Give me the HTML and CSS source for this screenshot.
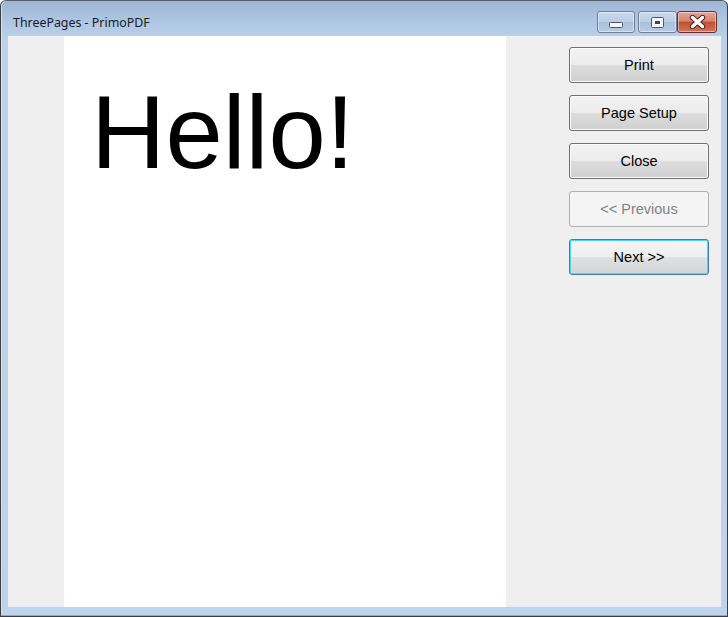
FILE: index.html
```html
<!DOCTYPE html>
<html>
<head>
    <title>ThreePages - PrimoPDF</title>
    <link rel="stylesheet" href="styles.css">
</head>
<body>
    <div class="ventana">
        <div class="barra-titulo">
            <span class="titulo">ThreePages - PrimoPDF</span>
            <div class="botones-ventana">
                <div class="btn-ventana btn-min">
                    <svg width="14" height="6" viewBox="0 0 14 6"><rect x="0.5" y="0.5" width="13" height="5" rx="1" fill="#f4f6f8" stroke="#4c5563"/></svg>
                </div>
                <div class="btn-ventana btn-max">
                    <svg width="13" height="11" viewBox="0 0 13 11"><rect x="0.5" y="0.5" width="12" height="10" rx="1" fill="#f4f6f8" stroke="#4c5563"/><rect x="4" y="4" width="5" height="3" fill="#3c4656"/></svg>
                </div>
                <div class="btn-ventana btn-cerrar">
                    <svg width="17" height="14" viewBox="0 0 17 14"><path d="M3.5 2.5 L13.5 11.5 M13.5 2.5 L3.5 11.5" stroke="#4a2220" stroke-width="5.4" stroke-linecap="round" fill="none"/><path d="M3.5 2.5 L13.5 11.5 M13.5 2.5 L3.5 11.5" stroke="#ffffff" stroke-width="3.4" stroke-linecap="round" fill="none"/></svg>
                </div>
            </div>
        </div>

        <div class="cliente">
            <div class="margen"></div>
            <div class="hoja">
                <div class="saludo">Hello!</div>
            </div>
            <div class="lateral">
                <button class="boton">Print</button>
                <button class="boton">Page Setup</button>
                <button class="boton">Close</button>
                <button class="boton" disabled>&lt;&lt; Previous</button>
                <button class="boton activo">Next &gt;&gt;</button>
            </div>
        </div>
    </div>
</body>
</html>
```

FILE: styles.css
```css
html, body {
    margin: 0;
    padding: 0;
}

body {
    width: 728px;
    height: 617px;
    overflow: hidden;
    background-color: #ffffff;
}

.ventana {
    width: 728px;
    height: 617px;
    box-sizing: border-box;
    border: 1px solid #3d3d3d;
    border-top-color: #5a5f66;
    border-radius: 6px 6px 0 0;
    background: linear-gradient(to bottom, #9db6d4 0px, #aec6e2 20px, #bcd2ea 40px, #bfd3ea 100%);
    box-shadow: inset 0 -1px 0 #46c6e8, inset 1px 0 0 #d7e4f2;
    display: flex;
    flex-direction: column;
}

.barra-titulo {
    height: 35px;
    display: flex;
    align-items: flex-start;
    justify-content: space-between;
}

.titulo {
    font-family: "Noto Sans", "Open Sans", sans-serif;
    font-size: 12.4px;
    color: #1a1a1a;
    padding-left: 12px;
    margin-top: 13px;
    line-height: 17px;
}

.botones-ventana {
    display: flex;
    margin-top: 10px;
    margin-right: 10px;
}

.btn-ventana {
    height: 20px;
    border: 1px solid #6d819c;
    border-radius: 3px;
    display: flex;
    align-items: center;
    justify-content: center;
    box-shadow: inset 0 0 0 1px rgba(255, 255, 255, 0.45);
}

.btn-min {
    width: 36px;
    margin-right: 3px;
    background: linear-gradient(to bottom, #cbdaeb 0%, #bacde3 50%, #a9bfd9 51%, #b7cce3 100%);
}

.btn-min svg {
    margin-top: 5px;
}

.btn-max {
    width: 37px;
    background: linear-gradient(to bottom, #cbdaeb 0%, #bacde3 50%, #a9bfd9 51%, #b7cce3 100%);
}

.btn-cerrar {
    width: 38px;
    border-color: #6e2c26;
    background: linear-gradient(to bottom, #e8a493 0%, #d78470 45%, #c24f32 52%, #d0765c 100%);
}

.cliente {
    height: 571px;
    margin: 0 6px 0 7px;
    display: flex;
}

.margen {
    width: 56px;
    background-color: #efefef;
}

.hoja {
    width: 442px;
    background-color: #ffffff;
}

.saludo {
    font-family: "Liberation Sans", Arial, sans-serif;
    font-size: 103px;
    line-height: 1;
    color: #000000;
    margin-top: 45px;
    padding-left: 27px;
}

.lateral {
    flex: 1;
    background-color: #efefef;
    padding: 11px 0 0 63px;
    display: flex;
    flex-direction: column;
    gap: 12px;
}

.boton {
    width: 140px;
    height: 36px;
    border: 1px solid #707070;
    border-radius: 3px;
    background: linear-gradient(to bottom, #f2f2f2 0%, #ebebeb 50%, #dddddd 51%, #cfcfcf 100%);
    box-shadow: inset 0 0 0 1px #fbfbfb;
    font-family: "Liberation Sans", Arial, sans-serif;
    font-size: 14.5px;
    color: #000000;
    padding: 0;
    cursor: pointer;
}

.boton:disabled {
    border-color: #adb2b5;
    background: #f4f4f4;
    box-shadow: none;
    color: #838383;
    cursor: default;
}

.boton.activo {
    border-color: #3c7fb1;
    background: linear-gradient(to bottom, #f3f5f6 0%, #eceeef 50%, #dfe1e2 51%, #d2d5d6 100%);
    box-shadow: inset 0 0 0 1px #48d8fb;
}
```
